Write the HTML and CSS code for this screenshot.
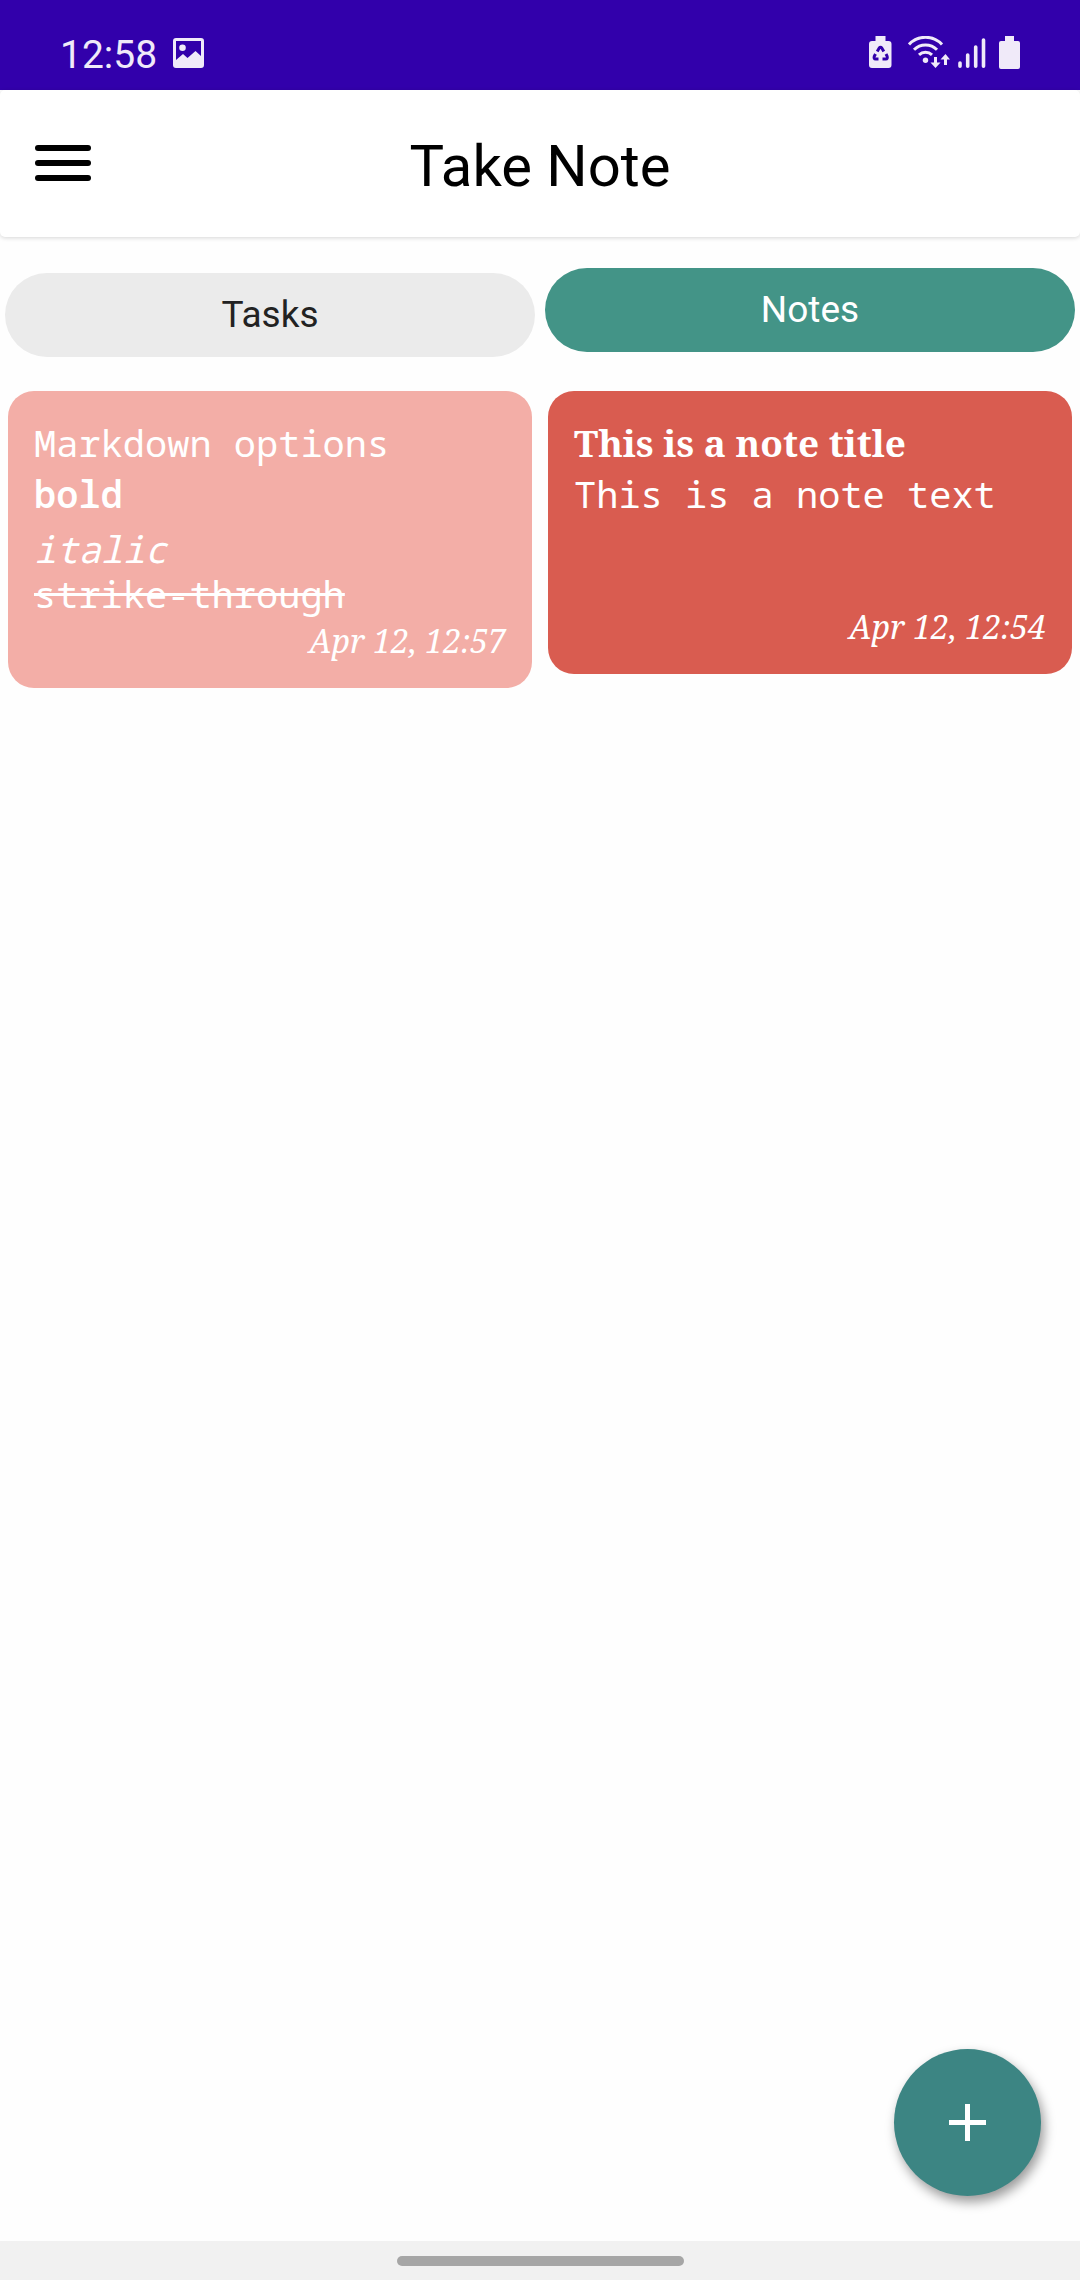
FILE: index.html
```html
<!DOCTYPE html>
<html lang="en">
<head>
<meta charset="utf-8">
<meta name="viewport" content="width=device-width, initial-scale=1">
<title>Take Note</title>
<link rel="stylesheet" href="styles.css">
</head>
<body>
<div class="app">
  <div class="status-bar">
    <div class="status-group">
      <span class="clock">12:58</span>
      <svg class="icon-picture" width="32" height="31" viewBox="0 0 32 31" aria-hidden="true"><path fill="currentColor" fill-rule="evenodd" d="M3 0h25a3 3 0 0 1 3 3v24a3 3 0 0 1-3 3H3a3 3 0 0 1-3-3V3a3 3 0 0 1 3-3zM3 3v19l7-6 4.500 4 8-7L28 18V3zM9.500 6.500a3.300 3.300 0 1 1 0 6.600 3.300 3.300 0 0 1 0-6.600z"/></svg>
    </div>
    <div class="status-group status-icons">
      <svg width="23" height="33" viewBox="0 0 23 33" aria-hidden="true"><path fill="currentColor" d="M6.500 0h10v5h3a3 3 0 0 1 3 3v21a3 3 0 0 1-3 3H3a3 3 0 0 1-3-3V8a3 3 0 0 1 3-3h3.500z"/><path class="recycle" d="M8.200 15.500l2-3.500q1.300-1.600 2.600 0l2 3.500M6.500 18l-1.200 2.200q-.8 2.800 1.400 2.900H9.500M17 18l1.100 2.200q.8 2.800-1.400 2.900H13.500"/></svg>
      <svg class="icon-wifi" width="42" height="33" viewBox="0 0 42 33" aria-hidden="true"><g fill="none" stroke="currentColor" stroke-width="3"><path d="M1 8.500a22.500 22.500 0 0 1 33 0M6 13.800a16 16 0 0 1 23 0M11 18.800a9.500 9.500 0 0 1 13 0"/></g><circle cx="17.500" cy="24.300" r="2.700" fill="currentColor"/><path fill="currentColor" d="M26 21h3v5.500h3.500l-5 5.500-5-5.500H26zM36 29h3v-5.500h3L37.500 18l-5 5.500H36z"/></svg>
      <svg class="icon-signal" width="28" height="33" viewBox="0 0 28 33" aria-hidden="true"><path stroke="currentColor" stroke-width="3.600" stroke-linecap="round" d="M2 27v3.300M9.700 19v11.300M17.700 11v19.300M25.500 4v26.300"/></svg>
      <svg class="icon-battery" width="21" height="33" viewBox="0 0 21 33" aria-hidden="true"><path fill="currentColor" d="M6 0h9v5h4a2 2 0 0 1 2 2v24a2 2 0 0 1-2 2H2a2 2 0 0 1-2-2V7a2 2 0 0 1 2-2h4z"/></svg>
    </div>
  </div>
  <header class="toolbar">
    <button class="menu-button" type="button" aria-label="Menu"><span class="menu-line"></span><span class="menu-line"></span><span class="menu-line"></span></button>
    <h1 class="toolbar-title">Take Note</h1>
  </header>
  <nav class="tabs" aria-label="Sections">
    <button class="tab" type="button">Tasks</button>
    <button class="tab tab-active" type="button">Notes</button>
  </nav>
  <main class="notes">
    <article class="note note-pink">
      <p class="note-line note-lead">Markdown options</p>
      <p class="note-line note-strong"><strong>bold</strong></p>
      <p class="note-line"><em>italic</em></p>
      <p class="note-line"><s>strike-through</s></p>
      <time class="note-date">Apr 12, 12:57</time>
    </article>
    <article class="note note-red">
      <h2 class="note-title note-lead">This is a note title</h2>
      <p class="note-line">This is a note text</p>
      <time class="note-date">Apr 12, 12:54</time>
    </article>
  </main>
  <button class="fab" type="button" aria-label="Add note"><svg width="37" height="37" viewBox="0 0 37 37" aria-hidden="true"><path fill="#fff" d="M16 0h5v16h16v5H21v16h-5V21H0v-5h16z"/></svg></button>
  <div class="gesture-bar"><span class="gesture-pill"></span></div>
</div>
</body>
</html>
```
FILE: styles.css
```css
* { box-sizing: border-box; }
body { margin: 0; background: #fefefe; font-family: Roboto, sans-serif; }
h1, h2, p { margin: 0; font-weight: 400; }
button { border: 0; padding: 0; font: inherit; cursor: pointer; }
svg { display: block; }

.app { position: relative; display: flex; flex-direction: column; min-height: 100vh; }

.status-bar { display: flex; justify-content: space-between; align-items: flex-start; height: 90px; padding: 36px 60px 0; background: #3200ab; color: #f0eaf9; }
.status-group { display: flex; gap: 16px; }
.clock { font-size: 39px; line-height: 38px; }
.icon-picture { margin-top: 2px; }
.status-icons { gap: 0; }
.icon-wifi { margin-left: 16px; }
.icon-signal { margin-left: 8px; }
.icon-battery { margin-left: 13px; }
.recycle { fill: none; stroke: #3200ab; stroke-width: 3; }

.toolbar { display: grid; grid-template-columns: 1fr auto 1fr; align-items: center; height: 147px; padding: 0 35px 2px; background: #fff; border-radius: 5px; box-shadow: 0 1px 4px rgba(0, 0, 0, .16); }
.menu-button { display: flex; flex-direction: column; gap: 9px; width: 56px; background: none; }
.menu-line { height: 6px; border-radius: 3px; background: #000; }
.toolbar-title { font-size: 58px; line-height: 68px; color: #000; padding-top: 6px; }

.tabs { display: grid; grid-template-columns: 1fr 1fr; gap: 10px; padding: 31px 5px 34px; }
.tab { height: 84px; padding-bottom: 2px; border-radius: 42px; margin-top: 5px; background: #ebebeb; color: #222; font-size: 37px; }
.tab-active { margin: 0 0 5px; background: #439487; color: #fff; }

.notes { display: grid; grid-template-columns: 1fr 1fr; align-items: start; gap: 16px; padding: 0 8px; }
.note { display: flex; flex-direction: column; min-height: 283px; padding: 29px 26px 22px; border-radius: 26px; color: #fff; font-family: "Noto Serif", "Droid Serif", serif; }
.note-pink { background: #f3aea7; }
.note-red { background: #d95c50; }
.note-line { font-family: "Droid Sans Mono", "Noto Sans Mono", "DejaVu Sans Mono", monospace; font-size: 37px; line-height: 45px; }
.note-line strong { font-weight: 600; }
.note-title { font-size: 37px; line-height: 45px; font-weight: 700; }
.note-lead { margin-bottom: 6px; }
.note-strong { margin-bottom: 10px; }
.note-date { margin-top: auto; align-self: flex-end; font-size: 32px; line-height: 50px; font-style: italic; }

.fab { position: fixed; right: 39px; bottom: 84px; display: grid; place-items: center; width: 147px; height: 147px; border-radius: 50%; background: #3c8583; box-shadow: 3px 6px 12px rgba(0, 0, 0, .4); }

.gesture-bar { display: flex; justify-content: center; align-items: center; height: 39px; margin-top: auto; background: #f1f1f1; }
.gesture-pill { width: 287px; height: 10px; border-radius: 5px; background: #a6a6a6; }
```
